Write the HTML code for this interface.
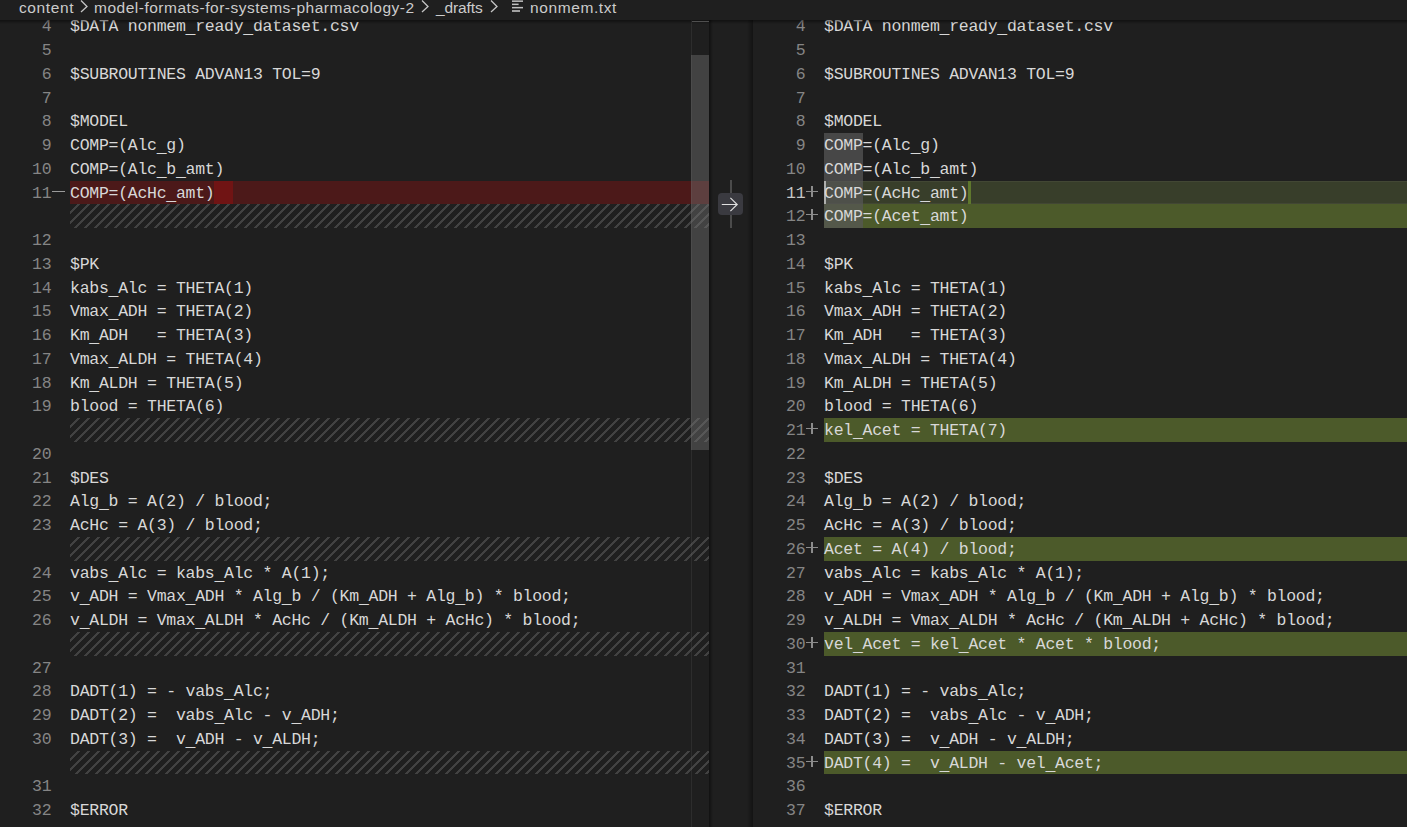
<!DOCTYPE html>
<html><head><meta charset="utf-8">
<style>
html,body{margin:0;padding:0}
body{width:1407px;height:827px;overflow:hidden;position:relative;background:#1f1f1f;font-family:"Liberation Mono",monospace}
.bc{position:absolute;left:0;top:0;width:1407px;height:20px;background:#1f1f1f;z-index:5;font-family:"Liberation Sans",sans-serif;font-size:15.5px;color:#cccccc}
.bc span{position:absolute;top:-2px;white-space:pre;line-height:20px}
.bcsh{position:absolute;left:0;top:20px;width:1407px;height:4px;background:linear-gradient(rgba(0,0,0,0.45),rgba(0,0,0,0));z-index:5}
.ed{position:absolute;top:20px;height:807px;overflow:hidden}
#le{left:0;width:709px}
#re{left:753px;width:654px}
.ln{position:absolute;margin-top:1px;height:23.75px;line-height:24px;text-align:right;color:#858585;font-size:16.5px;letter-spacing:-0.275px;white-space:pre}
.ln.act{color:#c6c6c6}
.code{position:absolute;margin-top:1px;height:23.75px;line-height:24px;color:#d8d8d8;font-size:16.5px;letter-spacing:-0.275px;white-space:pre}
.bg{position:absolute;height:23.75px}
.u{position:relative;top:2px}
.del{background:#4c1919}
.delc{background:#701414}
.ins{background:#4c5a2a}
.insl{background:#383e2a;box-shadow:inset 0 1px 0 rgba(255,255,255,0.05),inset 0 -1px 0 rgba(255,255,255,0.05)}
.insc{background:#5f782d}
.wh{background:rgba(87,87,87,0.72)}
.cursor{position:absolute;width:2px;height:23.75px;background:#aeafad}
.hatch{position:absolute;height:23.75px;background-image:linear-gradient(-45deg,rgba(204,204,204,0.2) 17%,transparent 17%,transparent 50%,rgba(204,204,204,0.2) 50%,rgba(204,204,204,0.2) 67%,transparent 67%,transparent 100%);background-size:10px 10px;background-position:1px 0}
.mk{position:absolute;width:14px;height:23.75px}
.minus{left:52px}
.minus::after{content:"";position:absolute;left:0px;top:10px;width:13px;height:1.1px;background:#9a9a9a}
.plus{left:53px}
.plus::before{content:"";position:absolute;left:0px;top:10px;width:12.3px;height:1.2px;background:#8c8c8c}
.plus::after{content:"";position:absolute;left:5.2px;top:4.6px;width:1.6px;height:11.6px;background:#8c8c8c}
.sb{position:absolute;left:691px;top:20px;width:18px;height:807px;z-index:3;border-left:1px solid rgba(127,127,127,0.15);box-sizing:border-box}
.thumb{position:absolute;left:691px;top:55px;width:18px;height:395px;background:rgba(121,121,121,0.4);z-index:3}
.sbtop{position:absolute;left:692px;top:20.5px;width:17px;height:1.8px;background:#6e6e6e;z-index:4}
.sh1{position:absolute;left:709px;top:20px;width:4px;height:807px;background:linear-gradient(90deg,rgba(0,0,0,0.45),rgba(0,0,0,0))}
.sh2{position:absolute;left:747px;top:20px;width:6px;height:807px;background:linear-gradient(90deg,rgba(0,0,0,0),rgba(0,0,0,0.4))}
.vline{position:absolute;left:730px;top:180px;width:2.2px;height:48px;background:#4b4b4b}
.btn{position:absolute;left:718px;top:193px;width:25px;height:22px;border-radius:4px;background:#3a3a40}
</style></head><body>
<div class="bc">
<span style="left:19px;letter-spacing:0.6px">content</span>
<svg style="position:absolute;left:79px;top:-1px" width="10" height="14" viewBox="0 0 10 14"><path d="M2 1.5 L8 7.5 L2 13" fill="none" stroke="#c4c4c4" stroke-width="1.3"/></svg>
<span style="left:94px;letter-spacing:0.5px">model-formats-for-systems-pharmacology-2</span>
<svg style="position:absolute;left:420px;top:-1px" width="10" height="14" viewBox="0 0 10 14"><path d="M2 1.5 L8 7.5 L2 13" fill="none" stroke="#c4c4c4" stroke-width="1.3"/></svg>
<span style="left:436px;letter-spacing:-0.1px">_drafts</span>
<svg style="position:absolute;left:489px;top:-1px" width="10" height="14" viewBox="0 0 10 14"><path d="M2 1.5 L8 7.5 L2 13" fill="none" stroke="#c4c4c4" stroke-width="1.3"/></svg>
<svg style="position:absolute;left:511px;top:0" width="14" height="14" viewBox="0 0 14 14"><g fill="#c0c0c0"><rect x="1" y="0.4" width="11" height="1.5"/><rect x="1" y="3.6" width="6.6" height="1.5"/><rect x="1" y="6.9" width="11" height="1.5"/><rect x="1" y="10.2" width="8" height="1.6"/></g></svg>
<span style="left:530px;letter-spacing:0.6px">nonmem.txt</span>
</div>
<div class="bcsh"></div>
<div class="ed" id="le">
<div class="ln" style="top:-6px;left:0;width:51.3px">4</div><div class="code" style="top:-6px;left:70px">$DATA nonmem<span class="u">_</span>ready<span class="u">_</span>dataset.csv</div><div class="ln" style="top:18px;left:0;width:51.3px">5</div><div class="ln" style="top:42px;left:0;width:51.3px">6</div><div class="code" style="top:42px;left:70px">$SUBROUTINES ADVAN13 TOL=9</div><div class="ln" style="top:66px;left:0;width:51.3px">7</div><div class="ln" style="top:89px;left:0;width:51.3px">8</div><div class="code" style="top:89px;left:70px">$MODEL</div><div class="ln" style="top:113px;left:0;width:51.3px">9</div><div class="code" style="top:113px;left:70px">COMP=(Alc<span class="u">_</span>g)</div><div class="ln" style="top:137px;left:0;width:51.3px">10</div><div class="code" style="top:137px;left:70px">COMP=(Alc<span class="u">_</span>b<span class="u">_</span>amt)</div><div class="bg del" style="top:161px;height:23px;left:70px;width:639px"></div><div class="bg delc" style="top:161px;height:23px;left:214px;width:19px"></div><div class="mk minus" style="top:161px"></div><div class="ln" style="top:161px;left:0;width:51.3px">11</div><div class="code" style="top:161px;left:70px">COMP=(AcHc<span class="u">_</span>amt)</div><div class="hatch" style="top:184px;height:24px;left:70px;width:639px"></div><div class="ln" style="top:208px;left:0;width:51.3px">12</div><div class="ln" style="top:232px;left:0;width:51.3px">13</div><div class="code" style="top:232px;left:70px">$PK</div><div class="ln" style="top:256px;left:0;width:51.3px">14</div><div class="code" style="top:256px;left:70px">kabs<span class="u">_</span>Alc = THETA(1)</div><div class="ln" style="top:279px;left:0;width:51.3px">15</div><div class="code" style="top:279px;left:70px">Vmax<span class="u">_</span>ADH = THETA(2)</div><div class="ln" style="top:303px;left:0;width:51.3px">16</div><div class="code" style="top:303px;left:70px">Km<span class="u">_</span>ADH   = THETA(3)</div><div class="ln" style="top:327px;left:0;width:51.3px">17</div><div class="code" style="top:327px;left:70px">Vmax<span class="u">_</span>ALDH = THETA(4)</div><div class="ln" style="top:351px;left:0;width:51.3px">18</div><div class="code" style="top:351px;left:70px">Km<span class="u">_</span>ALDH = THETA(5)</div><div class="ln" style="top:374px;left:0;width:51.3px">19</div><div class="code" style="top:374px;left:70px">blood = THETA(6)</div><div class="hatch" style="top:398px;height:24px;left:70px;width:639px"></div><div class="ln" style="top:422px;left:0;width:51.3px">20</div><div class="ln" style="top:446px;left:0;width:51.3px">21</div><div class="code" style="top:446px;left:70px">$DES</div><div class="ln" style="top:469px;left:0;width:51.3px">22</div><div class="code" style="top:469px;left:70px">Alg<span class="u">_</span>b = A(2) / blood;</div><div class="ln" style="top:493px;left:0;width:51.3px">23</div><div class="code" style="top:493px;left:70px">AcHc = A(3) / blood;</div><div class="hatch" style="top:517px;height:24px;left:70px;width:639px"></div><div class="ln" style="top:541px;left:0;width:51.3px">24</div><div class="code" style="top:541px;left:70px">vabs<span class="u">_</span>Alc = kabs<span class="u">_</span>Alc * A(1);</div><div class="ln" style="top:564px;left:0;width:51.3px">25</div><div class="code" style="top:564px;left:70px">v<span class="u">_</span>ADH = Vmax<span class="u">_</span>ADH * Alg<span class="u">_</span>b / (Km<span class="u">_</span>ADH + Alg<span class="u">_</span>b) * blood;</div><div class="ln" style="top:588px;left:0;width:51.3px">26</div><div class="code" style="top:588px;left:70px">v<span class="u">_</span>ALDH = Vmax<span class="u">_</span>ALDH * AcHc / (Km<span class="u">_</span>ALDH + AcHc) * blood;</div><div class="hatch" style="top:612px;height:24px;left:70px;width:639px"></div><div class="ln" style="top:636px;left:0;width:51.3px">27</div><div class="ln" style="top:659px;left:0;width:51.3px">28</div><div class="code" style="top:659px;left:70px">DADT(1) = - vabs<span class="u">_</span>Alc;</div><div class="ln" style="top:683px;left:0;width:51.3px">29</div><div class="code" style="top:683px;left:70px">DADT(2) =  vabs<span class="u">_</span>Alc - v<span class="u">_</span>ADH;</div><div class="ln" style="top:707px;left:0;width:51.3px">30</div><div class="code" style="top:707px;left:70px">DADT(3) =  v<span class="u">_</span>ADH - v<span class="u">_</span>ALDH;</div><div class="hatch" style="top:731px;height:23px;left:70px;width:639px"></div><div class="ln" style="top:754px;left:0;width:51.3px">31</div><div class="ln" style="top:778px;left:0;width:51.3px">32</div><div class="code" style="top:778px;left:70px">$ERROR</div>
</div>
<div class="sb"></div>
<div class="thumb"></div>
<div class="sbtop"></div>
<div class="sh1"></div>
<div class="sh2"></div>
<div class="vline"></div>
<div class="btn"></div>
<svg style="position:absolute;left:718px;top:193px" width="25" height="22" viewBox="0 0 25 22"><path d="M3.8 11.5 H19 M12.4 4.9 L19.2 11.5 L12.4 18.1" fill="none" stroke="#e0e0e0" stroke-width="1.15"/></svg>
<div class="ed" id="re">
<div class="ln" style="top:-6px;left:0;width:52.3px">4</div><div class="code" style="top:-6px;left:71px">$DATA nonmem<span class="u">_</span>ready<span class="u">_</span>dataset.csv</div><div class="ln" style="top:18px;left:0;width:52.3px">5</div><div class="ln" style="top:42px;left:0;width:52.3px">6</div><div class="code" style="top:42px;left:71px">$SUBROUTINES ADVAN13 TOL=9</div><div class="ln" style="top:66px;left:0;width:52.3px">7</div><div class="ln" style="top:89px;left:0;width:52.3px">8</div><div class="code" style="top:89px;left:71px">$MODEL</div><div class="bg wh" style="top:113px;height:24px;left:71px;width:38.50px"></div><div class="ln" style="top:113px;left:0;width:52.3px">9</div><div class="code" style="top:113px;left:71px">COMP=(Alc<span class="u">_</span>g)</div><div class="bg wh" style="top:137px;height:24px;left:71px;width:38.50px"></div><div class="ln" style="top:137px;left:0;width:52.3px">10</div><div class="code" style="top:137px;left:71px">COMP=(Alc<span class="u">_</span>b<span class="u">_</span>amt)</div><div class="bg insl" style="top:161px;height:23px;left:71px;width:700px"></div><div class="bg insc" style="top:161px;height:23px;left:215.38px;width:3px"></div><div class="mk plus" style="top:161px"></div><div class="bg wh" style="top:161px;height:23px;left:71px;width:38.50px"></div><div class="cursor" style="top:161px;height:23px;left:71px"></div><div class="ln act" style="top:161px;left:0;width:52.3px">11</div><div class="code" style="top:161px;left:71px">COMP=(AcHc<span class="u">_</span>amt)</div><div class="bg ins" style="top:184px;height:24px;left:71px;width:700px"></div><div class="mk plus" style="top:184px"></div><div class="bg wh" style="top:184px;height:24px;left:71px;width:38.50px"></div><div class="ln" style="top:184px;left:0;width:52.3px">12</div><div class="code" style="top:184px;left:71px">COMP=(Acet<span class="u">_</span>amt)</div><div class="ln" style="top:208px;left:0;width:52.3px">13</div><div class="ln" style="top:232px;left:0;width:52.3px">14</div><div class="code" style="top:232px;left:71px">$PK</div><div class="ln" style="top:256px;left:0;width:52.3px">15</div><div class="code" style="top:256px;left:71px">kabs<span class="u">_</span>Alc = THETA(1)</div><div class="ln" style="top:279px;left:0;width:52.3px">16</div><div class="code" style="top:279px;left:71px">Vmax<span class="u">_</span>ADH = THETA(2)</div><div class="ln" style="top:303px;left:0;width:52.3px">17</div><div class="code" style="top:303px;left:71px">Km<span class="u">_</span>ADH   = THETA(3)</div><div class="ln" style="top:327px;left:0;width:52.3px">18</div><div class="code" style="top:327px;left:71px">Vmax<span class="u">_</span>ALDH = THETA(4)</div><div class="ln" style="top:351px;left:0;width:52.3px">19</div><div class="code" style="top:351px;left:71px">Km<span class="u">_</span>ALDH = THETA(5)</div><div class="ln" style="top:374px;left:0;width:52.3px">20</div><div class="code" style="top:374px;left:71px">blood = THETA(6)</div><div class="bg ins" style="top:398px;height:24px;left:71px;width:700px"></div><div class="mk plus" style="top:398px"></div><div class="ln" style="top:398px;left:0;width:52.3px">21</div><div class="code" style="top:398px;left:71px">kel<span class="u">_</span>Acet = THETA(7)</div><div class="ln" style="top:422px;left:0;width:52.3px">22</div><div class="ln" style="top:446px;left:0;width:52.3px">23</div><div class="code" style="top:446px;left:71px">$DES</div><div class="ln" style="top:469px;left:0;width:52.3px">24</div><div class="code" style="top:469px;left:71px">Alg<span class="u">_</span>b = A(2) / blood;</div><div class="ln" style="top:493px;left:0;width:52.3px">25</div><div class="code" style="top:493px;left:71px">AcHc = A(3) / blood;</div><div class="bg ins" style="top:517px;height:24px;left:71px;width:700px"></div><div class="mk plus" style="top:517px"></div><div class="ln" style="top:517px;left:0;width:52.3px">26</div><div class="code" style="top:517px;left:71px">Acet = A(4) / blood;</div><div class="ln" style="top:541px;left:0;width:52.3px">27</div><div class="code" style="top:541px;left:71px">vabs<span class="u">_</span>Alc = kabs<span class="u">_</span>Alc * A(1);</div><div class="ln" style="top:564px;left:0;width:52.3px">28</div><div class="code" style="top:564px;left:71px">v<span class="u">_</span>ADH = Vmax<span class="u">_</span>ADH * Alg<span class="u">_</span>b / (Km<span class="u">_</span>ADH + Alg<span class="u">_</span>b) * blood;</div><div class="ln" style="top:588px;left:0;width:52.3px">29</div><div class="code" style="top:588px;left:71px">v<span class="u">_</span>ALDH = Vmax<span class="u">_</span>ALDH * AcHc / (Km<span class="u">_</span>ALDH + AcHc) * blood;</div><div class="bg ins" style="top:612px;height:24px;left:71px;width:700px"></div><div class="mk plus" style="top:612px"></div><div class="ln" style="top:612px;left:0;width:52.3px">30</div><div class="code" style="top:612px;left:71px">vel<span class="u">_</span>Acet = kel<span class="u">_</span>Acet * Acet * blood;</div><div class="ln" style="top:636px;left:0;width:52.3px">31</div><div class="ln" style="top:659px;left:0;width:52.3px">32</div><div class="code" style="top:659px;left:71px">DADT(1) = - vabs<span class="u">_</span>Alc;</div><div class="ln" style="top:683px;left:0;width:52.3px">33</div><div class="code" style="top:683px;left:71px">DADT(2) =  vabs<span class="u">_</span>Alc - v<span class="u">_</span>ADH;</div><div class="ln" style="top:707px;left:0;width:52.3px">34</div><div class="code" style="top:707px;left:71px">DADT(3) =  v<span class="u">_</span>ADH - v<span class="u">_</span>ALDH;</div><div class="bg ins" style="top:731px;height:23px;left:71px;width:700px"></div><div class="mk plus" style="top:731px"></div><div class="ln" style="top:731px;left:0;width:52.3px">35</div><div class="code" style="top:731px;left:71px">DADT(4) =  v<span class="u">_</span>ALDH - vel<span class="u">_</span>Acet;</div><div class="ln" style="top:754px;left:0;width:52.3px">36</div><div class="ln" style="top:778px;left:0;width:52.3px">37</div><div class="code" style="top:778px;left:71px">$ERROR</div>
</div>
</body></html>
